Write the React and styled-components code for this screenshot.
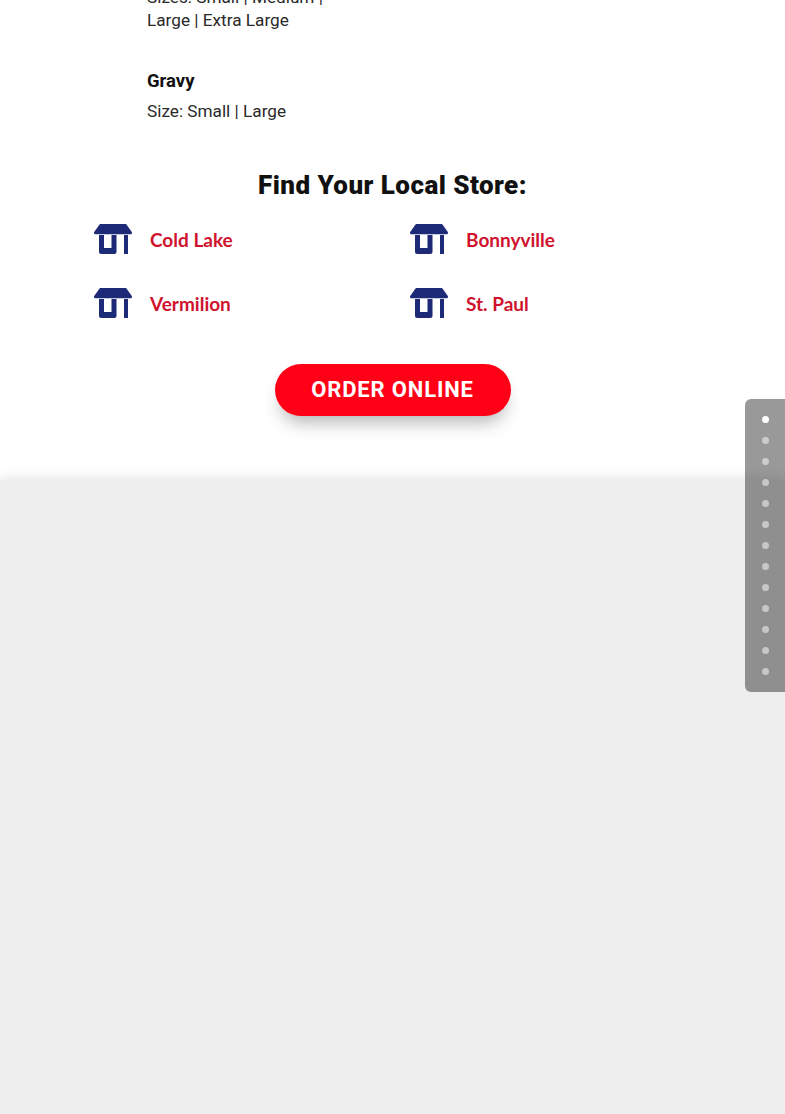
import React from 'react'
import styled, { createGlobalStyle } from 'styled-components'

const GlobalStyle = createGlobalStyle`
  html, body {
    margin: 0;
    padding: 0;
    height: 1114px;
    overflow: hidden;
    background-color: #eeeeee;
    font-family: 'Roboto', 'Liberation Sans', sans-serif;
  }
`
const Page = styled.div`
  position: relative;
  height: 1114px;
  overflow: hidden;
`
const Section = styled.section`
  height: 480px;
  background-color: #ffffff;
  overflow: hidden;
`
const Footer = styled.footer`
  position: relative;
  height: 634px;
  background-color: #eeeeee;
  box-shadow: 0 -2px 12px rgba(0, 0, 0, 0.11);
`
const Menu = styled.div`
  margin: -14px 0 0 147px;
  width: 190px;
`
const Text = styled.p`
  margin: 0;
  font-size: 17.2px;
  line-height: 23px;
  color: #2a2a2a;
`
const MenuTitle = styled.h4`
  margin: 36px 0 5px;
  font-size: 18.5px;
  line-height: 27px;
  font-weight: 700;
  color: #111111;
`
const Heading = styled.h2`
  margin: 44px 0 21px;
  text-align: center;
  font-size: 26px;
  line-height: 36px;
  font-weight: 900;
  letter-spacing: 0.46px;
  color: #111111;
`
const Stores = styled.div`
  display: grid;
  grid-template-columns: 316px 316px;
  row-gap: 34px;
  padding-left: 94px;
`
const Store = styled.a`
  display: flex;
  align-items: center;
  gap: 18px;
  height: 30px;
  text-decoration: none;
`
const StoreName = styled.span`
  font-family: 'Lato', 'Liberation Sans', sans-serif;
  font-size: 19px;
  font-weight: 700;
  color: #d0122d;
`
const ButtonRow = styled.div`
  display: flex;
  justify-content: center;
  margin-top: 46px;
`
const OrderButton = styled.a`
  display: flex;
  align-items: center;
  justify-content: center;
  box-sizing: border-box;
  width: 236px;
  height: 52px;
  padding-bottom: 2px;
  border-radius: 26px;
  background-color: #ff0016;
  box-shadow: 0 12px 18px -6px rgba(0, 0, 0, 0.3);
  color: #ffffff;
  font-size: 22px;
  font-weight: 700;
  letter-spacing: 0.85px;
  text-decoration: none;
`
const DotNav = styled.nav`
  position: absolute;
  top: 399px;
  right: 0;
  display: flex;
  flex-direction: column;
  align-items: center;
  gap: 14px;
  box-sizing: border-box;
  width: 40px;
  height: 293px;
  padding-top: 17px;
  background-color: rgba(0, 0, 0, 0.4);
  border-radius: 6px 0 0 6px;
`
const Dot = styled.span`
  width: 7px;
  height: 7px;
  border-radius: 50%;
  background-color: ${(props) => (props.$active ? '#ffffff' : 'rgba(255, 255, 255, 0.5)')};
`

function StoreIcon() {
  return (
    <svg width="38" height="30" viewBox="0 0 38 30" fill="#1c2a78">
      <path d="M7 0H31C32 0 32.6 .4 33 1.2L37.8 8C38.4 9.2 37.6 10.3 36.4 10.3H1.6C.4 10.3 -.4 9.2 .2 8L5 1.2C5.4 .4 6 0 7 0Z" />
      <path d="M5 11H10V24H17.5V11H22.5V27.7C22.5 29 21.6 30 20.3 30H7.2C5.9 30 5 29 5 27.7Z" />
      <path d="M30 11H34V30H30Z" />
    </svg>
  )
}

const stores = ['Cold Lake', 'Bonnyville', 'Vermilion', 'St. Paul']

export default function App() {
  return (
    <Page>
      <GlobalStyle />
      <Section>
        <Menu>
          <Text>Sizes: Small | Medium | Large | Extra Large</Text>
          <MenuTitle>Gravy</MenuTitle>
          <Text>Size: Small | Large</Text>
        </Menu>
        <Heading>Find Your Local Store:</Heading>
        <Stores>
          {stores.map((name) => (
            <Store key={name} href="#">
              <StoreIcon />
              <StoreName>{name}</StoreName>
            </Store>
          ))}
        </Stores>
        <ButtonRow>
          <OrderButton href="#">ORDER ONLINE</OrderButton>
        </ButtonRow>
      </Section>
      <Footer />
      <DotNav>
        {Array.from({ length: 13 }, (_, i) => (
          <Dot key={i} $active={i === 0} />
        ))}
      </DotNav>
    </Page>
  )
}
